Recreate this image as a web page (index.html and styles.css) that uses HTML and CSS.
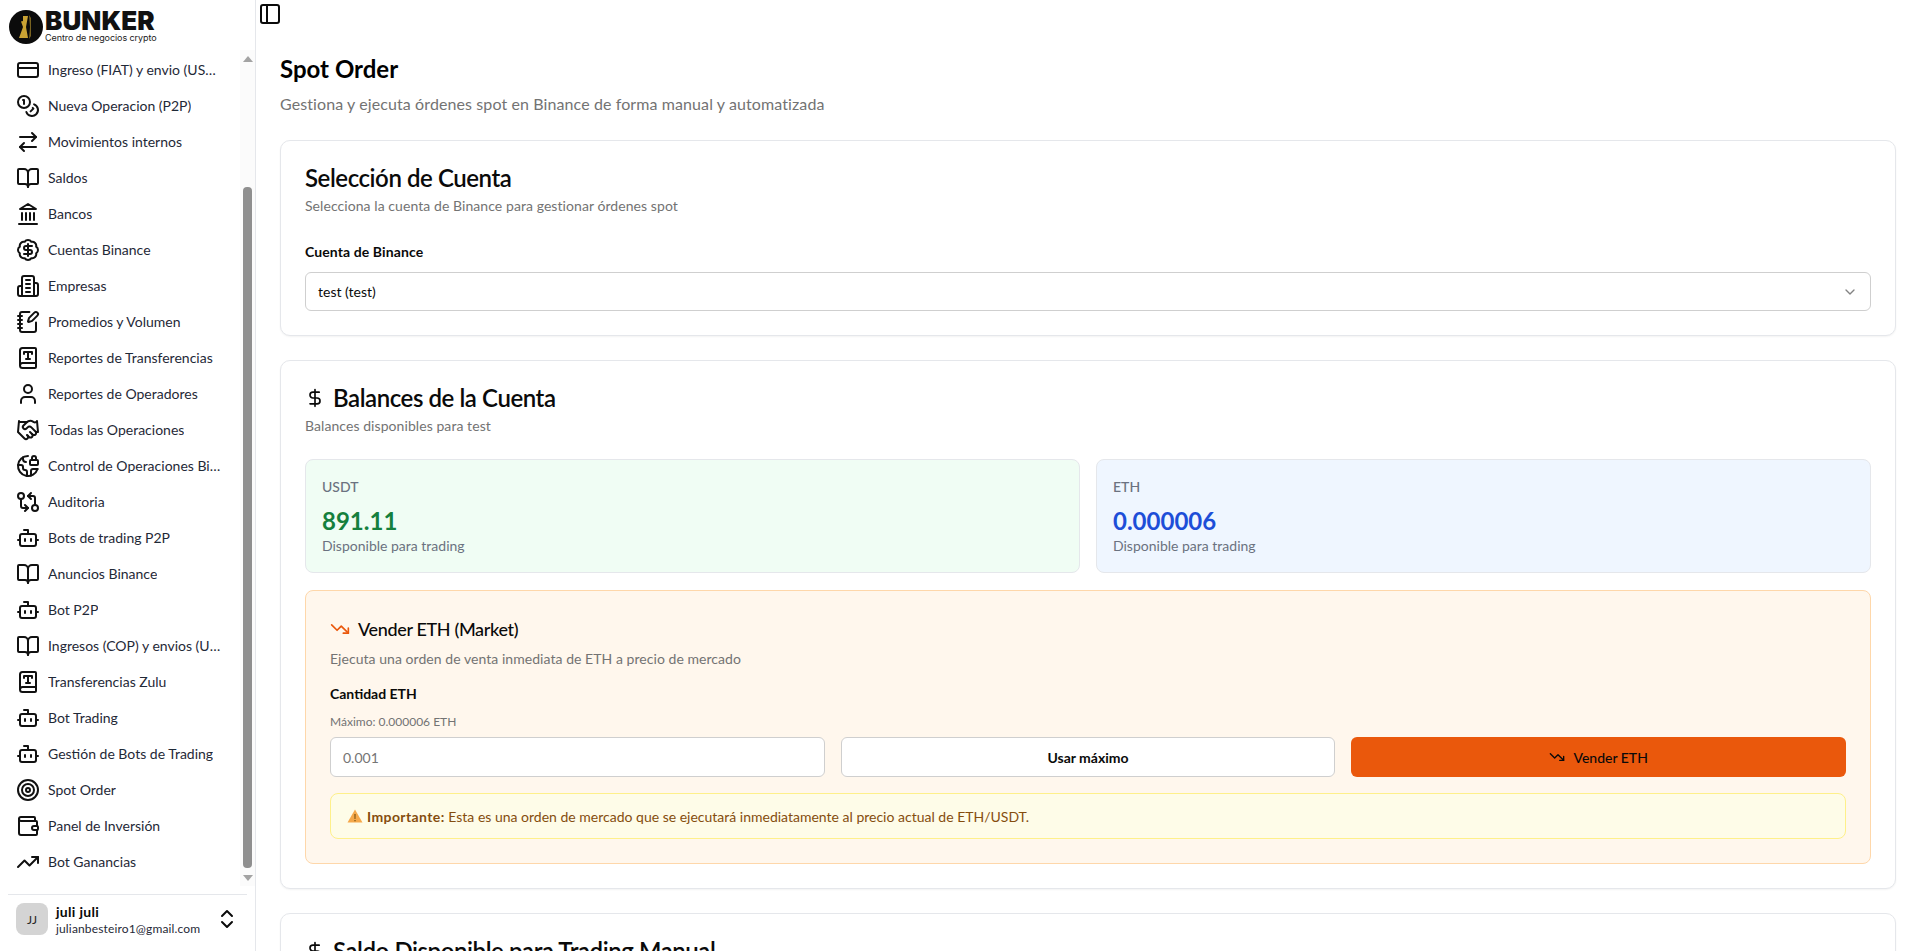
FILE: index.html
```html
<!DOCTYPE html>
<html lang="es">
<head>
<meta charset="utf-8">
<title>Spot Order</title>
<link rel="stylesheet" href="styles.css">
</head>
<body>
<svg class="defs" width="0" height="0" aria-hidden="true">
  <symbol id="i-card" viewBox="0 0 24 24"><rect x="2" y="5" width="20" height="14" rx="2"/><line x1="2" y1="10" x2="22" y2="10"/></symbol>
  <symbol id="i-coins" viewBox="0 0 24 24"><circle cx="8" cy="8" r="6"/><path d="M18.09 10.37A6 6 0 1 1 10.34 18"/><path d="M7 6h1v4"/><path d="m16.71 13.88.7.71-2.82 2.82"/></symbol>
  <symbol id="i-arrows" viewBox="0 0 24 24"><path d="m16 3 4 4-4 4"/><path d="M20 7H4"/><path d="m8 21-4-4 4-4"/><path d="M4 17h16"/></symbol>
  <symbol id="i-book" viewBox="0 0 24 24"><path d="M12 7v14"/><path d="M3 18a1 1 0 0 1-1-1V4a1 1 0 0 1 1-1h5a4 4 0 0 1 4 4 4 4 0 0 1 4-4h5a1 1 0 0 1 1 1v13a1 1 0 0 1-1 1h-6a3 3 0 0 0-3 3 3 3 0 0 0-3-3z"/></symbol>
  <symbol id="i-bank" viewBox="0 0 24 24"><line x1="3" y1="22" x2="21" y2="22"/><line x1="6" y1="18" x2="6" y2="11"/><line x1="10" y1="18" x2="10" y2="11"/><line x1="14" y1="18" x2="14" y2="11"/><line x1="18" y1="18" x2="18" y2="11"/><polygon points="12 2 20 7 4 7"/></symbol>
  <symbol id="i-badge" viewBox="0 0 24 24"><path d="M3.85 8.62a4 4 0 0 1 4.78-4.77 4 4 0 0 1 6.74 0 4 4 0 0 1 4.78 4.78 4 4 0 0 1 0 6.74 4 4 0 0 1-4.77 4.78 4 4 0 0 1-6.75 0 4 4 0 0 1-4.78-4.77 4 4 0 0 1 0-6.76Z"/><path d="M16 8h-6a2 2 0 1 0 0 4h4a2 2 0 1 1 0 4H8"/><path d="M12 18V6"/></symbol>
  <symbol id="i-building" viewBox="0 0 24 24"><path d="M6 22V4a2 2 0 0 1 2-2h8a2 2 0 0 1 2 2v18Z"/><path d="M6 12H4a2 2 0 0 0-2 2v6a2 2 0 0 0 2 2h2"/><path d="M18 9h2a2 2 0 0 1 2 2v9a2 2 0 0 1-2 2h-2"/><path d="M10 6h4"/><path d="M10 10h4"/><path d="M10 14h4"/><path d="M10 18h4"/></symbol>
  <symbol id="i-notebook" viewBox="0 0 24 24"><path d="M13.4 2H6a2 2 0 0 0-2 2v16a2 2 0 0 0 2 2h12a2 2 0 0 0 2-2v-7.4"/><path d="M2 6h4"/><path d="M2 10h4"/><path d="M2 14h4"/><path d="M2 18h4"/><path d="M21.378 5.626a1 1 0 1 0-3.004-3.004l-5.01 5.012a2 2 0 0 0-.506.854l-.837 2.87a.5.5 0 0 0 .62.62l2.87-.837a2 2 0 0 0 .854-.506z"/></symbol>
  <symbol id="i-booktype" viewBox="0 0 24 24"><path d="M10 13h4"/><path d="M12 6v7"/><path d="M16 8V6H8v2"/><path d="M4 19.5v-15A2.5 2.5 0 0 1 6.5 2H19a1 1 0 0 1 1 1v18a1 1 0 0 1-1 1H6.5a1 1 0 0 1 0-5H20"/></symbol>
  <symbol id="i-user" viewBox="0 0 24 24"><path d="M19 21v-2a4 4 0 0 0-4-4H9a4 4 0 0 0-4 4v2"/><circle cx="12" cy="7" r="4"/></symbol>
  <symbol id="i-hands" viewBox="0 0 24 24"><path d="m11 17 2 2a1 1 0 1 0 3-3"/><path d="m14 14 2.5 2.5a1 1 0 1 0 3-3l-3.88-3.88a3 3 0 0 0-4.24 0l-.88.88a1 1 0 1 1-3-3l2.81-2.81a5.79 5.79 0 0 1 7.06-.87l.47.28a2 2 0 0 0 1.42.25L21 4"/><path d="m21 3 1 11h-2"/><path d="M3 3 2 14l6.5 6.5a1 1 0 1 0 3-3"/><path d="M3 4h8"/></symbol>
  <symbol id="i-earth" viewBox="0 0 24 24"><path d="M7 3.34V5a3 3 0 0 0 3 3"/><path d="M11 21.95V18a2 2 0 0 0-2-2 2 2 0 0 1-2-2v-1a2 2 0 0 0-2-2H2.05"/><path d="M21.54 15H17a2 2 0 0 0-2 2v4.54"/><path d="M12 2a10 10 0 1 0 9.54 13"/><path d="M20 6V4a2 2 0 1 0-4 0v2"/><rect x="14" y="6" width="8" height="5" rx="1"/></symbol>
  <symbol id="i-compare" viewBox="0 0 24 24"><circle cx="5" cy="6" r="3"/><path d="M12 6h5a2 2 0 0 1 2 2v7"/><path d="m15 9-3-3 3-3"/><circle cx="19" cy="18" r="3"/><path d="M12 18H7a2 2 0 0 1-2-2V9"/><path d="m9 15 3 3-3 3"/></symbol>
  <symbol id="i-bot" viewBox="0 0 24 24"><path d="M12 8V4H8"/><rect x="4" y="8" width="16" height="12" rx="2"/><path d="M2 14h2"/><path d="M20 14h2"/><path d="M15 13v2"/><path d="M9 13v2"/></symbol>
  <symbol id="i-target" viewBox="0 0 24 24"><circle cx="12" cy="12" r="10"/><circle cx="12" cy="12" r="6"/><circle cx="12" cy="12" r="2"/></symbol>
  <symbol id="i-wallet" viewBox="0 0 24 24"><path d="M19 7V4a1 1 0 0 0-1-1H5a2 2 0 0 0 0 4h15a1 1 0 0 1 1 1v4h-3a2 2 0 0 0 0 4h3a1 1 0 0 0 1-1v-2a1 1 0 0 0-1-1"/><path d="M3 5v14a2 2 0 0 0 2 2h15a1 1 0 0 0 1-1v-4"/></symbol>
  <symbol id="i-up" viewBox="0 0 24 24"><polyline points="22 7 13.5 15.5 8.5 10.5 2 17"/><polyline points="16 7 22 7 22 13"/></symbol>
  <symbol id="i-down" viewBox="0 0 24 24"><polyline points="22 17 13.5 8.5 8.5 13.5 2 7"/><polyline points="16 17 22 17 22 11"/></symbol>
  <symbol id="i-updown" viewBox="0 0 24 24"><path d="m7 15 5 5 5-5"/><path d="m7 9 5-5 5 5"/></symbol>
  <symbol id="i-chev" viewBox="0 0 24 24"><path d="m6 9 6 6 6-6"/></symbol>
  <symbol id="i-dollar" viewBox="0 0 24 24"><line x1="12" y1="2" x2="12" y2="22"/><path d="M17 5H9.5a3.5 3.5 0 0 0 0 7h5a3.5 3.5 0 0 1 0 7H6"/></symbol>
  <symbol id="i-panel" viewBox="0 0 24 24"><rect x="3" y="3" width="18" height="18" rx="2"/><path d="M9 3v18"/></symbol>
</svg>

<aside class="sidebar">
  <div class="brand">
    <svg class="brand-mark" viewBox="0 0 34 34" aria-hidden="true">
      <circle class="mark-disc" cx="17" cy="17" r="17"/>
      <path class="mark-gold" d="M10 6h9l-2 11 2 11h-9l4-11z"/>
      <path class="mark-cut" d="M10 6h4v5l-4 1z"/>
      <path class="mark-dark" d="M20 5l2 3v18l-2 3 1-12z"/>
    </svg>
    <div class="brand-text">
      <div class="brand-name">BUNKER</div>
      <div class="brand-tag">Centro de negocios crypto</div>
    </div>
  </div>
  <div class="nav-wrap">
    <nav class="nav">
      <a class="nav-item"><svg class="ico"><use href="#i-card"/></svg><span class="nav-label">Ingreso (FIAT) y envio (USDT)</span></a>
      <a class="nav-item"><svg class="ico"><use href="#i-coins"/></svg><span class="nav-label">Nueva Operacion (P2P)</span></a>
      <a class="nav-item"><svg class="ico"><use href="#i-arrows"/></svg><span class="nav-label">Movimientos internos</span></a>
      <a class="nav-item"><svg class="ico"><use href="#i-book"/></svg><span class="nav-label">Saldos</span></a>
      <a class="nav-item"><svg class="ico"><use href="#i-bank"/></svg><span class="nav-label">Bancos</span></a>
      <a class="nav-item"><svg class="ico"><use href="#i-badge"/></svg><span class="nav-label">Cuentas Binance</span></a>
      <a class="nav-item"><svg class="ico"><use href="#i-building"/></svg><span class="nav-label">Empresas</span></a>
      <a class="nav-item"><svg class="ico"><use href="#i-notebook"/></svg><span class="nav-label">Promedios y Volumen</span></a>
      <a class="nav-item"><svg class="ico"><use href="#i-booktype"/></svg><span class="nav-label">Reportes de Transferencias</span></a>
      <a class="nav-item"><svg class="ico"><use href="#i-user"/></svg><span class="nav-label">Reportes de Operadores</span></a>
      <a class="nav-item"><svg class="ico"><use href="#i-hands"/></svg><span class="nav-label">Todas las Operaciones</span></a>
      <a class="nav-item"><svg class="ico"><use href="#i-earth"/></svg><span class="nav-label">Control de Operaciones Binance</span></a>
      <a class="nav-item"><svg class="ico"><use href="#i-compare"/></svg><span class="nav-label">Auditoria</span></a>
      <a class="nav-item"><svg class="ico"><use href="#i-bot"/></svg><span class="nav-label">Bots de trading P2P</span></a>
      <a class="nav-item"><svg class="ico"><use href="#i-book"/></svg><span class="nav-label">Anuncios Binance</span></a>
      <a class="nav-item"><svg class="ico"><use href="#i-bot"/></svg><span class="nav-label">Bot P2P</span></a>
      <a class="nav-item"><svg class="ico"><use href="#i-book"/></svg><span class="nav-label">Ingresos (COP) y envios (USDT)</span></a>
      <a class="nav-item"><svg class="ico"><use href="#i-booktype"/></svg><span class="nav-label">Transferencias Zulu</span></a>
      <a class="nav-item"><svg class="ico"><use href="#i-bot"/></svg><span class="nav-label">Bot Trading</span></a>
      <a class="nav-item"><svg class="ico"><use href="#i-bot"/></svg><span class="nav-label">Gestión de Bots de Trading</span></a>
      <a class="nav-item"><svg class="ico"><use href="#i-target"/></svg><span class="nav-label">Spot Order</span></a>
      <a class="nav-item"><svg class="ico"><use href="#i-wallet"/></svg><span class="nav-label">Panel de Inversión</span></a>
      <a class="nav-item"><svg class="ico"><use href="#i-up"/></svg><span class="nav-label">Bot Ganancias</span></a>
    </nav>
    <div class="scrollbar" aria-hidden="true">
      <div class="sb-up"></div>
      <div class="sb-lane"><div class="sb-thumb"></div></div>
      <div class="sb-down"></div>
    </div>
  </div>
  <div class="user-row">
    <div class="avatar">JJ</div>
    <div class="user-text">
      <div class="user-name">juli juli</div>
      <div class="user-mail">julianbesteiro1@gmail.com</div>
    </div>
    <svg class="ico"><use href="#i-updown"/></svg>
  </div>
</aside>

<main class="main">
  <div class="topbar"><svg class="ico"><use href="#i-panel"/></svg></div>
  <div class="content">
    <h1 class="page-title">Spot Order</h1>
    <p class="page-sub">Gestiona y ejecuta órdenes spot en Binance de forma manual y automatizada</p>

    <section class="card">
      <h2 class="card-title">Selección de Cuenta</h2>
      <p class="card-sub">Selecciona la cuenta de Binance para gestionar órdenes spot</p>
      <div class="field-label account-label">Cuenta de Binance</div>
      <div class="select"><span>test (test)</span><svg class="ico-16 dim"><use href="#i-chev"/></svg></div>
    </section>

    <section class="card">
      <h2 class="card-title"><svg class="ico-20"><use href="#i-dollar"/></svg>Balances de la Cuenta</h2>
      <p class="card-sub">Balances disponibles para test</p>
      <div class="tiles">
        <div class="tile tile-green">
          <div class="tile-coin">USDT</div>
          <div class="tile-value value-green">891.11</div>
          <div class="tile-note">Disponible para trading</div>
        </div>
        <div class="tile tile-blue">
          <div class="tile-coin">ETH</div>
          <div class="tile-value value-blue">0.000006</div>
          <div class="tile-note">Disponible para trading</div>
        </div>
      </div>
      <div class="sell">
        <h3 class="sell-title"><svg class="ico-20 orange"><use href="#i-down"/></svg>Vender ETH (Market)</h3>
        <p class="sell-sub">Ejecuta una orden de venta inmediata de ETH a precio de mercado</p>
        <div class="field-label qty-label">Cantidad ETH</div>
        <div class="max-note">Máximo: 0.000006 ETH</div>
        <div class="sell-row">
          <div class="input">0.001</div>
          <div class="btn btn-outline">Usar máximo</div>
          <div class="btn btn-orange"><svg class="ico-16"><use href="#i-down"/></svg>Vender ETH</div>
        </div>
        <div class="alert">
          <svg class="warn" viewBox="0 0 16 16" aria-hidden="true"><path class="warn-tri" d="M8 1.5 15.5 14.5H.5z"/><path class="warn-mark" d="M7.5 6h1l-.1 5h-.8zM7.5 12h1v1.2h-1z"/></svg>
          <span><strong class="alert-lead">Importante:</strong> Esta es una orden de mercado que se ejecutará inmediatamente al precio actual de ETH/USDT.</span>
        </div>
      </div>
    </section>

    <section class="card">
      <h2 class="card-title"><svg class="ico-20"><use href="#i-dollar"/></svg>Saldo Disponible para Trading Manual</h2>
      <p class="card-sub">Balances disponibles para test</p>
    </section>
  </div>
</main>
</body>
</html>
```

FILE: styles.css
```css
* { box-sizing: border-box; }
html, body { height: 100%; }
body {
  margin: 0;
  display: flex;
  overflow: hidden;
  background: #fff;
  color: #0a0a0a;
  font-family: Lato, "Noto Sans", "Liberation Sans", sans-serif;
  font-size: 14px;
}
h1, h2, h3, p { margin: 0; }
.defs { position: absolute; }

.ico, .ico-16, .ico-20 {
  fill: none;
  stroke: currentColor;
  stroke-width: 2;
  stroke-linecap: round;
  stroke-linejoin: round;
  flex: none;
}
.ico { width: 24px; height: 24px; }
.ico-16 { width: 16px; height: 16px; }
.ico-20 { width: 20px; height: 20px; }
.dim { opacity: .5; }
.orange { color: #ea580c; }

/* Sidebar */
.sidebar {
  width: 256px;
  flex: none;
  height: 100%;
  display: flex;
  flex-direction: column;
  border-right: 1px solid #e5e7eb;
}
.brand {
  height: 50px;
  flex: none;
  display: flex;
  align-items: flex-start;
  gap: 2px;
  padding: 10px 0 0 9px;
}
.brand-mark { width: 34px; height: 34px; flex: none; }
.mark-disc { fill: #0b0b0b; }
.mark-gold { fill: #c9a233; }
.mark-dark { fill: #7a6320; }
.mark-cut { fill: #0b0b0b; }
.brand-text { display: flex; flex-direction: column; }
.brand-name {
  font-family: Inter, Lato, sans-serif;
  font-size: 26px;
  line-height: 22px;
  font-weight: 900;
  letter-spacing: .1px;
  color: #111;
}
.brand-tag {
  font-family: Inter, Lato, sans-serif;
  font-size: 9px;
  line-height: 11px;
  color: #222;
  letter-spacing: -.08px;
}
.nav-wrap {
  height: 836px;
  flex: none;
  display: flex;
  overflow: hidden;
}
.nav {
  flex: 1;
  min-width: 0;
  padding: 2px 16px 0 8px;
  overflow: hidden;
}
.nav-item {
  height: 36px;
  display: flex;
  align-items: center;
  gap: 8px;
  padding-left: 8px;
  color: #1f2937;
}
.nav-item .ico { color: #111; }
.nav-label {
  min-width: 0;
  white-space: nowrap;
  overflow: hidden;
  text-overflow: ellipsis;
  font-size: 14px;
  line-height: 20px;
}
.scrollbar {
  width: 15px;
  flex: none;
  display: flex;
  flex-direction: column;
  background: #fbfbfb;
}
.sb-up, .sb-down {
  height: 17px;
  flex: none;
  display: flex;
  align-items: center;
  justify-content: center;
}
.sb-up::before, .sb-down::before {
  content: "";
  border-left: 5px solid transparent;
  border-right: 5px solid transparent;
}
.sb-up::before { border-bottom: 6px solid #a3a3a3; }
.sb-down::before { border-top: 6px solid #a3a3a3; }
.sb-lane { flex: 1; padding: 120px 3px 0; }
.sb-thumb { height: 681px; border-radius: 4px; background: #8f8f8f; }
.user-row {
  flex: 1;
  margin: 8px 8px 0;
  border-top: 1px solid #e5e7eb;
  display: flex;
  align-items: flex-start;
  gap: 8px;
  padding: 8px 8px 0;
}
.user-row .ico { margin-left: auto; margin-top: 4px; }
.avatar {
  width: 32px;
  height: 32px;
  flex: none;
  border-radius: 8px;
  background: #d4d4d4;
  display: flex;
  align-items: center;
  justify-content: center;
  font-size: 12px;
  color: #262626;
}
.user-text { min-width: 0; }
.user-name { font-size: 14px; line-height: 17px; font-weight: 700; letter-spacing: .3px; }
.user-mail { font-size: 12px; line-height: 16px; margin-top: 1px; color: #1f2937; white-space: nowrap; letter-spacing: .15px; }

/* Main */
.main { flex: 1; min-width: 0; height: 100%; overflow: hidden; }
.topbar { height: 29px; padding: 2px 0 0 2px; }
.content { padding: 24px 24px 0; }
.page-title { font-size: 24px; line-height: 32px; font-weight: 700; color: #000; }
.page-sub { font-size: 16px; line-height: 24px; margin-top: 7px; color: #737373; letter-spacing: .1px; }
.card {
  margin-top: 24px;
  padding: 24px;
  background: #fff;
  border: 1px solid #e5e7eb;
  border-radius: 10px;
  box-shadow: 0 1px 2px rgba(0,0,0,.05);
}
.card-title {
  display: flex;
  align-items: center;
  gap: 8px;
  margin-top: 1px;
  font-size: 24px;
  line-height: 24px;
  font-weight: 600;
  letter-spacing: -.43px;
  color: #0a0a0a;
}
.card-sub { font-size: 14px; line-height: 20px; margin-top: 6px; color: #737373; letter-spacing: .07px; }
.field-label { font-size: 14px; line-height: 20px; font-weight: 700; color: #0a0a0a; }
.account-label { margin-top: 26px; letter-spacing: .1px; }
.select, .input {
  border: 1px solid #cfcfcf;
  border-radius: 6px;
  background: #fff;
  display: flex;
  align-items: center;
  padding: 0 12px;
  font-size: 14px;
}
.select { height: 39px; margin-top: 10px; justify-content: space-between; }
.input { height: 40px; color: #757575; }

.tiles {
  display: grid;
  grid-template-columns: 1fr 1fr;
  gap: 16px;
  margin-top: 23px;
}
.tile { height: 114px; padding: 17px 16px 0; border: 1px solid #e5e7eb; border-radius: 8px; }
.tile-green { background: #f0fdf4; }
.tile-blue { background: #eff6ff; }
.tile-coin { font-size: 14px; line-height: 20px; font-weight: 500; color: #6b7280; }
.tile-value { font-size: 24px; line-height: 32px; font-weight: 700; margin-top: 8px; }
.value-green { color: #15803d; }
.value-blue { color: #1d4ed8; }
.tile-note { font-size: 14px; line-height: 20px; margin-top: -1px; color: #6b7280; }

.sell {
  margin-top: 17px;
  padding: 24px;
  background: #fff7ed;
  border: 1px solid #fed7aa;
  border-radius: 8px;
}
.sell-title {
  display: flex;
  align-items: center;
  gap: 8px;
  font-size: 18px;
  line-height: 28px;
  font-weight: 500;
  letter-spacing: -.35px;
  color: #0a0a0a;
}
.sell-sub { font-size: 14px; line-height: 20px; margin-top: 6px; color: #737373; letter-spacing: .05px; }
.qty-label { margin-top: 15px; }
.max-note { font-size: 12px; line-height: 16px; margin-top: 10px; color: #737373; }
.sell-row {
  display: grid;
  grid-template-columns: repeat(3, 1fr);
  gap: 16px;
  margin-top: 7px;
}
.btn {
  height: 40px;
  border-radius: 6px;
  display: flex;
  align-items: center;
  justify-content: center;
  gap: 8px;
  font-size: 14px;
  font-weight: 700;
  color: #0a0a0a;
}
.btn-outline { background: #fff; border: 1px solid #cfcfcf; }
.btn-orange { background: #ea580c; font-weight: 500; }
.alert {
  margin-top: 16px;
  height: 46px;
  padding: 0 16px;
  display: flex;
  align-items: center;
  gap: 4px;
  background: #fefce8;
  border: 1px solid #fef08a;
  border-radius: 8px;
  color: #854d0e;
  font-size: 14px;
}
.alert-lead { letter-spacing: .4px; }
.warn { width: 16px; height: 16px; flex: none; }
.warn-tri { fill: #f5a84a; }
.warn-mark { fill: #5c3d00; }
```
